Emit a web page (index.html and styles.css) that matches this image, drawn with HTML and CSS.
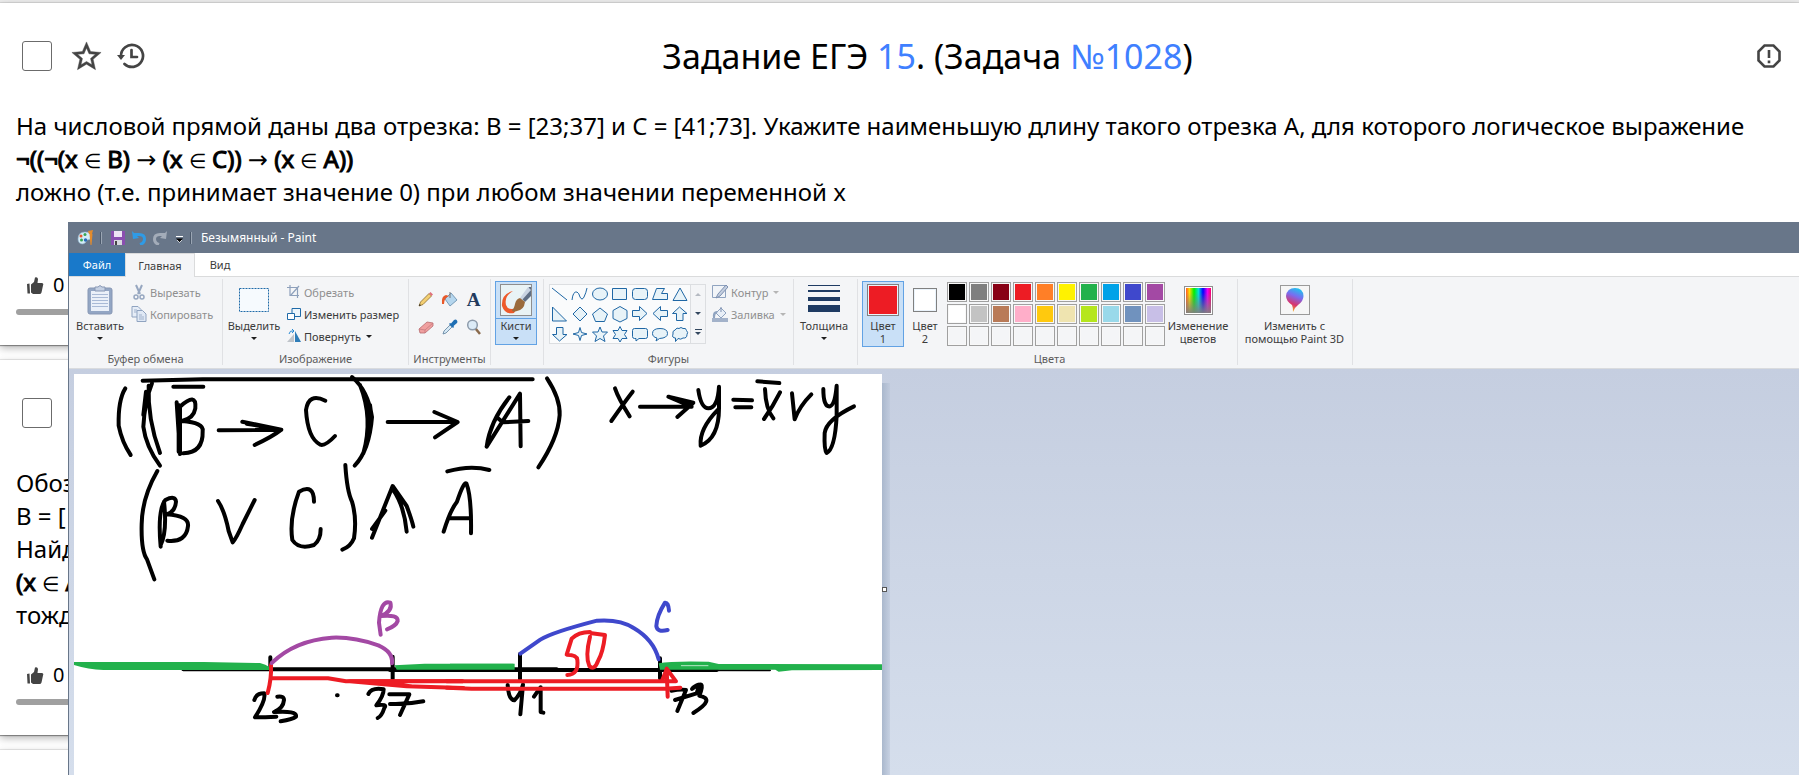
FILE: index.html
```html
<!DOCTYPE html>
<html lang="ru">
<head>
<meta charset="utf-8">
<title>Задание ЕГЭ 15</title>
<link rel="stylesheet" href="styles.css">
</head>
<body>
<main class="page">
  <article class="card card-first">
    <header class="card-head">
      <input class="tick" type="checkbox" aria-label="Выбрать задачу">
      <button class="icon-btn" aria-label="В избранное"><svg width="35" height="35" viewBox="0 0 24 24"><path fill="#444" d="M22 9.24l-7.19-.62L12 2 9.19 8.63 2 9.24l5.46 4.73L5.82 21 12 17.27 18.18 21l-1.63-7.03L22 9.24zM12 15.4l-3.76 2.27 1-4.28-3.32-2.88 4.38-.38L12 6.1l1.71 4.04 4.38.38-3.32 2.88 1 4.28L12 15.4z" stroke="#444" stroke-width=".3"/></svg></button>
      <button class="icon-btn" aria-label="История"><svg width="28" height="28" viewBox="0 0 28 28"><g fill="none" stroke="#444" stroke-width="2.7" stroke-linecap="round"><path d="M4 14a11 11 0 1 1 3.5 8"/><path d="M14.500 8v7h5.500"/></g><path d="M0 13h8l-4 5z" fill="#444"/></svg></button>
      <h1 class="title">Задание ЕГЭ <a href="#t15">15</a>. (Задача <a href="#n1028">№1028</a>)</h1>
      <button class="icon-btn" aria-label="Сообщить об ошибке"><svg width="24" height="24" viewBox="0 0 24 24"><path d="M7.500 1.500h9l6 6v9l-6 6h-9l-6-6v-9z" fill="none" stroke="#444" stroke-width="2.6"/><path d="M12 6v8M12 16.500v2.700" stroke="#444" stroke-width="2.600"/></svg></button>
    </header>
    <div class="task">
      <p>На числовой прямой даны два отрезка: B = [23;37] и C = [41;73]. Укажите наименьшую длину такого отрезка A, для которого логическое выражение</p>
      <p class="formula">¬((¬(x <i>∈</i> B) <b>→</b> (x <i>∈</i> C)) <b>→</b> (x <i>∈</i> A))</p>
      <p>ложно (т.е. принимает значение 0) при любом значении переменной x</p>
    </div>
    <footer class="votes">
      <button class="vote"><svg width="17" height="17" viewBox="0 0 17 17"><path fill="#444" d="M0 7l2.500-.5.5 10H.5zM4 7.500L7 5l1-4.500Q10.500-.5 11 2l-.5 4H15q2 .5 1 2.500l-1.500 7q-.5 1.500-2 1.500H6l-2-1.500z"/></svg><span>0</span></button>
      <div class="rate"></div>
    </footer>
  </article>
  <article class="card">
    <header class="card-head">
      <input class="tick" type="checkbox" aria-label="Выбрать задачу">
    </header>
    <div class="task">
      <p>Обоз</p><p>B = [</p><p>Найд</p><p class="formula">(x <i>∈</i> A</p><p>тожд</p>
    </div>
    <footer class="votes">
      <button class="vote"><svg width="17" height="17" viewBox="0 0 17 17"><path fill="#444" d="M0 7l2.500-.5.5 10H.5zM4 7.500L7 5l1-4.500Q10.500-.5 11 2l-.5 4H15q2 .5 1 2.500l-1.500 7q-.5 1.500-2 1.500H6l-2-1.500z"/></svg><span>0</span></button>
      <div class="rate"></div>
    </footer>
  </article>
  <article class="card card-next"></article>

  <section class="paint" aria-label="Paint">
    <div class="titlebar">
      <svg width="17" height="17" viewBox="0 0 17 17"><path d="M1 10Q1 3 8 3q6 0 6 5 0 3-4 3-1 3-4 4-5 0-5-5z" fill="#d4ecf8" stroke="#8fb4cc" stroke-width=".6"/><circle cx="4" cy="7" r="1.500" fill="#e4572e"/><circle cx="8" cy="5.500" r="1.500" fill="#3aa655"/><circle cx="4.500" cy="11" r="1.500" fill="#3aa655"/><circle cx="8.500" cy="11" r="1.700" fill="#2b6cb8"/><path d="M11 2l5-1-1 4h-3zM12.500 5h3l-1 11h-1z" fill="#e38b2c"/></svg>
      <span class="bar-sep"></span>
      <button class="qa" aria-label="Сохранить"><svg width="14" height="14" viewBox="0 0 14 14"><path d="M0 0h14v14H0z" fill="#8a4fb0"/><path d="M3 0h8v6H3z" fill="#eee3f5"/><path d="M3 9h8v5H3z" fill="#d8d8de"/><path d="M4 10h2v4H4z" fill="#444"/></svg></button>
      <button class="qa" aria-label="Отменить"><svg width="14" height="14" viewBox="0 0 14 14"><path d="M1 3.500h6q5.500 0 5.500 4.500 0 4-4.500 5.500" fill="none" stroke="#2f9be6" stroke-width="3"/><path d="M0 0l1 8 6-1z" fill="#2f9be6"/></svg></button>
      <button class="qa" aria-label="Повторить"><svg width="14" height="14" viewBox="0 0 14 14"><path d="M13 3.500H7Q1.500 3.500 1.500 8q0 4 4.500 5.500" fill="none" stroke="#a3acb9" stroke-width="3"/><path d="M14 0l-1 8-6-1z" fill="#a3acb9"/></svg></button>
      <button class="qa qa-more" aria-label="Настройка"><svg width="7" height="7" viewBox="0 0 7 7"><path d="M0 .5h7" stroke="#fff"/><path d="M0 2.500h7L3.500 6z" fill="#000"/><path d="M1 4l2.500 2.500L6 4" stroke="#fff" stroke-width=".7" fill="none"/></svg></button>
      <span class="bar-sep"></span>
      <span class="win-title">Безымянный - Paint</span>
    </div>
    <nav class="tabs">
      <button class="tab tab-file">Файл</button><button class="tab tab-home">Главная</button><button class="tab tab-view">Вид</button>
    </nav>
    <div class="ribbon">
      <section class="group g-clip">
        <div class="tools">
          <button class="big"><span class="pic"><svg width="26" height="32" viewBox="0 0 26 32"><rect x="1" y="4" width="24" height="26" rx="2" fill="#93a6c4" stroke="#8797b4"/><path d="M4 7h18v20H4z" fill="#eaf0f9"/><path d="M5 10.500h16M5 13.500h16M5 16.500h16M5 19.500h16M5 22.500h16" stroke="#a9bad6"/><path d="M8 3h3q2-3 4 0h3v4H8z" fill="#c4d0e3" stroke="#8797b4"/></svg></span><span>Вставить</span><b class="arr"></b></button>
          <div class="stack">
            <button class="small off"><svg width="16" height="16" viewBox="0 0 16 16"><path d="M5 1l4 9M11 1L7 10" stroke="#97a7c0" stroke-width="2"/><circle cx="5" cy="13" r="2" fill="none" stroke="#97a7c0" stroke-width="1.500"/><circle cx="11" cy="13" r="2" fill="none" stroke="#97a7c0" stroke-width="1.500"/></svg>Вырезать</button>
            <button class="small off"><svg width="16" height="16" viewBox="0 0 16 16"><path d="M1 .5h6l3 3V11H1z" fill="#e6edf7" stroke="#8fa3c0"/><path d="M6 4.500h5.500L15 8v7.500H6z" fill="#dfe8f5" stroke="#8fa3c0"/><path d="M3 4h3M3 6h3M8 9h3M8 11h5M8 13h5" stroke="#9fb1cc"/></svg>Копировать</button>
          </div>
        </div>
        <h2>Буфер обмена</h2>
      </section>
      <section class="group g-img">
        <div class="tools">
          <button class="big"><span class="pic"><svg width="32" height="32" viewBox="0 0 32 32"><rect x="1.500" y="4.500" width="29" height="23" fill="#f6fafe" stroke="#1f6aa8" stroke-dasharray="2 1"/></svg></span><span>Выделить</span><b class="arr"></b></button>
          <div class="stack">
            <button class="small off"><svg width="14" height="14" viewBox="0 0 14 14"><path d="M3 0v10.500h9M0 2.500h10.500V13M4 10l8-9" fill="none" stroke="#8ea0bb" stroke-width="1.200"/></svg>Обрезать</button>
            <button class="small"><svg width="14" height="14" viewBox="0 0 14 14"><path d="M5 1.500h8.500v8H5z" fill="#eef6fc" stroke="#1f6aa8"/><path d="M.5 6.500h7v6h-7z" fill="#fff" stroke="#1f6aa8"/></svg>Изменить размер</button>
            <button class="small"><svg width="14" height="14" viewBox="0 0 14 14"><path d="M0 13h7V5z" fill="#bfc4ca"/><path d="M8 13V2l6 11z" fill="#2f7db8"/><path d="M2 5Q3 1 6 2M5 0l2 2-2 2" fill="none" stroke="#2a8ad4"/></svg>Повернуть<b class="arr"></b></button>
          </div>
        </div>
        <h2>Изображение</h2>
      </section>
      <section class="group g-tools">
        <div class="tools tool-grid">
          <button aria-label="Карандаш"><svg width="16" height="16" viewBox="0 0 16 16"><path d="M1 15l1.500-4L11 2.500l2.500 2.500L5 13.500z" fill="#f3cf73" stroke="#8a6b2c" stroke-width=".8"/><path d="M11 2.500l1.500-1.500L15 3.500 13.500 5z" fill="#e0707c"/><path d="M1 15l.7-2 1.300 1.300z" fill="#222"/></svg></button>
          <button aria-label="Заливка"><svg width="17" height="17" viewBox="0 0 17 17"><path d="M4 8l6-6 6 7-7 6z" fill="#b5d6ee" stroke="#5f88a8" stroke-width=".8"/><path d="M1 13Q0 5 5 4l3 1Q3 7 3 13z" fill="#e8592a"/><path d="M9 1v6" stroke="#777"/></svg></button>
          <button aria-label="Текст" class="letter">A</button>
          <button aria-label="Ластик"><svg width="16" height="16" viewBox="0 0 16 16"><path d="M1 10l8-7 6 1v3l-8 7H2z" fill="#f0a0a0" stroke="#b86b6f" stroke-width=".8"/><path d="M1 10l6 1 8-7M7 11v3" stroke="#c87a7f" stroke-width=".8" fill="none"/></svg></button>
          <button aria-label="Палитра"><svg width="16" height="16" viewBox="0 0 16 16"><path d="M1 15l1-3 6-6 2 2-6 6z" fill="#d5e8f5" stroke="#5d7f9c" stroke-width=".8"/><path d="M7 5l1-1 1 .5L12 1q2-1 3 .5T15 4l-3.500 3 .5 1-1 1z" fill="#1f6fb4"/></svg></button>
          <button aria-label="Масштаб"><svg width="16" height="16" viewBox="0 0 16 16"><path d="M9.500 9.500L14 15" stroke="#8a6a4c" stroke-width="2.500"/><circle cx="6.500" cy="6" r="4.800" fill="#dcebf7" stroke="#8d9bab" stroke-width="1.500"/></svg></button>
        </div>
        <h2>Инструменты</h2>
      </section>
      <section class="group g-brush">
        <div class="tools">
          <button class="big chosen brush"><span class="pic"><svg width="32" height="32" viewBox="0 0 32 32"><rect x=".5" y=".5" width="31" height="31" fill="#e9f3f5" stroke="#8e8e8e"/><path d="M13 7Q1 10 2 22q3 9 12 7l3-5q-9 3-11-3Q4 12 13 7z" fill="#ee5a2a"/><path d="M31 3v9l-6 6-4-4 8-11z" fill="#5f6f85"/><path d="M28 3l-8 11 2 2 9-10z" fill="#c9d4e2"/><path d="M20 14l5 4q-1 8-8 9-5 2-5-1 2-1 3-6 1-5 5-6z" fill="#9a6b3c"/></svg></span><span>Кисти</span><b class="arr"></b></button>
        </div>
      </section>
      <section class="group g-shapes">
        <div class="tools">
          <div class="gallery">
            <div class="shapes">
              <button aria-label="Линия"><svg viewBox="0 0 20 20"><path d="M2 4l15 12"/></svg></button>
              <button aria-label="Кривая"><svg viewBox="0 0 20 20"><path fill="none" d="M2 16q1-9 5-8 2 1 3 5 2 4 4 0 2-4 3-9"/></svg></button>
              <button aria-label="Овал"><svg viewBox="0 0 20 20"><ellipse cx="10" cy="10" rx="7.500" ry="6"/></svg></button>
              <button aria-label="Прямоугольник"><svg viewBox="0 0 20 20"><path d="M2.500 4.500h14v11h-14z"/></svg></button>
              <button aria-label="Скруглённый прямоугольник"><svg viewBox="0 0 20 20"><rect x="2.500" y="4.500" width="15" height="11" rx="3"/></svg></button>
              <button aria-label="Многоугольник"><svg viewBox="0 0 20 20"><path d="M6.500 4.500h8l-3 5h6v6h-15z"/></svg></button>
              <button aria-label="Треугольник"><svg viewBox="0 0 20 20"><path d="M10 4l7 12.500H3z"/></svg></button>
              <button aria-label="Прямоугольный треугольник"><svg viewBox="0 0 20 20"><path d="M2.500 3v14h14z"/></svg></button>
              <button aria-label="Ромб"><svg viewBox="0 0 20 20"><path d="M10 3l7 7-7 7-7-7z"/></svg></button>
              <button aria-label="Пятиугольник"><svg viewBox="0 0 20 20"><path d="M10 4l7.500 6-3 7.500h-9l-3-7.500z"/></svg></button>
              <button aria-label="Шестиугольник"><svg viewBox="0 0 20 20"><path d="M10 2.500l7 4v8l-7 3.500-7-3.500v-8z"/></svg></button>
              <button aria-label="Стрелка вправо"><svg viewBox="0 0 20 20"><path d="M2.500 6.500h7v-4l7.500 7-7.500 7v-4h-7z"/></svg></button>
              <button aria-label="Стрелка влево"><svg viewBox="0 0 20 20"><path d="M17.500 6.500h-7v-4L3 9.500l7.500 7v-4h7z"/></svg></button>
              <button aria-label="Стрелка вверх"><svg viewBox="0 0 20 20"><path d="M6.500 16.500v-7h-4L9.500 3l7.500 6.500h-4v7z"/></svg></button>
              <button aria-label="Стрелка вниз"><svg viewBox="0 0 20 20"><path d="M6.500 3.500v7h-4l7 6.500 7.500-6.500h-4v-7z"/></svg></button>
              <button aria-label="Звезда 4"><svg viewBox="0 0 20 20"><path d="M10 3.500l1.500 5 5.500 1.500-5.500 1.500-1.500 5-1.500-5L3 10l5.500-1.500z"/></svg></button>
              <button aria-label="Звезда 5"><svg viewBox="0 0 20 20"><path d="M10 3l2 5h5.500l-4 4 1.500 5.500-5-3-5 3L6.500 12l-4-4H8z"/></svg></button>
              <button aria-label="Звезда 6"><svg viewBox="0 0 20 20"><path d="M10 2.500l2 4h5l-2.500 4 2.500 4h-5l-2 3.500-2-3.500H3l2.500-4-2.500-4h5z"/></svg></button>
              <button aria-label="Выноска"><svg viewBox="0 0 20 20"><path d="M4.500 4.500h11q2 0 2 2v6q0 2-2 2H9L6 17v-2.500H4.500q-2 0-2-2v-6q0-2 2-2z"/></svg></button>
              <button aria-label="Овальная выноска"><svg viewBox="0 0 20 20"><path d="M6 17l1-3Q2.500 13 2.500 9.500q0-5 7.500-5t7.500 5q0 4.500-8 5z"/></svg></button>
              <button aria-label="Облако"><svg viewBox="0 0 20 20"><path d="M5 6q2-3 4-1.500 2-2 4 0 3-1 3.500 2 2 2 .5 4 0 4-4 3.500-2 2-5 .5l-2.500 3V14q-4 0-2.500-4Q2 7 5 6z"/></svg></button>
            </div>
            <div class="scroll"><b class="arr up"></b><b class="arr"></b><b class="arr more"></b></div>
          </div>
          <div class="stack">
            <button class="small off"><svg width="16" height="16" viewBox="0 0 16 16"><path d="M.5 1.500h13v12H.5z" fill="#f1f4f8" stroke="#8fa3c0"/><path d="M4 14l2-4 8-9 2 2-8 9z" fill="#c3cedf" stroke="#7c8fb0"/></svg>Контур<b class="arr"></b></button>
            <button class="small off"><svg width="16" height="16" viewBox="0 0 16 16"><path d="M0 12h16v4H0z" fill="#a3b2ca"/><path d="M4 7l5-5 5 5-5 5z" fill="#e9eff7" stroke="#8fa3c0"/><path d="M1 12q-1-7 4-7l1 1q-3 1-3 6z" fill="#8fa3c0"/><path d="M9 1v5" stroke="#7c8fb0"/></svg>Заливка<b class="arr"></b></button>
          </div>
        </div>
        <h2>Фигуры</h2>
      </section>
      <section class="group g-size">
        <div class="tools">
          <button class="big"><span class="pic"><svg width="32" height="32" viewBox="0 0 32 32"><path d="M0 1h32v1H0zM0 6h32v2H0zM0 13h32v4H0zM0 21h32v7H0z" fill="#1f3b63"/></svg></span><span>Толщина</span><b class="arr"></b></button>
        </div>
      </section>
      <section class="group g-colors">
        <div class="tools">
          <button class="big chosen color-one"><span class="pic"><span class="swatch red"></span></span><span>Цвет</span><span>1</span></button>
          <button class="big second"><span class="pic"><span class="swatch white"></span></span><span>Цвет</span><span>2</span></button>
          <div class="palette">
            <i class="c-black"></i><i class="c-gray"></i><i class="c-dark"></i><i class="c-red"></i><i class="c-orange"></i><i class="c-yellow"></i><i class="c-green"></i><i class="c-cyan"></i><i class="c-indigo"></i><i class="c-purple"></i>
            <i class="c-white"></i><i class="c-silver"></i><i class="c-brown"></i><i class="c-pink"></i><i class="c-gold"></i><i class="c-sand"></i><i class="c-lime"></i><i class="c-sky"></i><i class="c-steel"></i><i class="c-lavender"></i>
            <i></i><i></i><i></i><i></i><i></i><i></i><i></i><i></i><i></i><i></i>
          </div>
          <button class="big edit"><span class="pic"><span class="rainbow"></span></span><span>Изменение</span><span>цветов</span></button>
        </div>
        <h2>Цвета</h2>
      </section>
      <section class="group g-3d">
        <div class="tools">
          <button class="big wide"><span class="pic"><svg width="30" height="30" viewBox="0 0 30 30"><defs><linearGradient id="drop" x1=".7" y1="0" x2=".4" y2="1"><stop offset="0" stop-color="#19c8ee"/><stop offset=".35" stop-color="#7a6cf0"/><stop offset=".7" stop-color="#d8346e"/><stop offset="1" stop-color="#f7b21b"/></linearGradient></defs><rect x=".5" y=".5" width="29" height="29" fill="#f6f6f6" stroke="#9a9a9a"/><path d="M15 3q8 0 8.500 8 0 5-5.500 9-3 2-5 7 0-5-1-7-6-4-6-9 1-8 9-8z" fill="url(#drop)"/></svg></span><span>Изменить с</span><span>помощью Paint 3D</span></button>
        </div>
      </section>
    </div>
    <div class="workspace">
      <div class="canvas">
        <svg class="drawing" width="808" height="401" viewBox="74 374 808 401" role="img" aria-label="Рисунок от руки: решение на числовой прямой">
          <g class="ink" transform="translate(60 365) scale(.33333)">
            <path d="M248 47l180-4h990M340 65h90"/>
            <path d="M196 70q-22 35-20 112 10 50 36 88M276 55q-22 55-26 130 8 60 50 117M266 62q-4 100 34 202M258 80l-8 70"/>
            <path d="M350 112l10 155V125q50-45 46 5-5 30-40 38 66 5 62 30 2 65-58 67M356 120v140"/>
            <path d="M476 196l188-2-117-24M560 176l104 18q-25 20-80 46"/>
            <path d="M796 107q-50-25-58 28 5 85 43 104 15 5 44-26"/>
            <path d="M876 36q48 40 60 120-8 100-52 146M900 60q40 100 10 205M930 120q8 40-4 90"/>
            <path d="M983 171h210l-70-30M1193 171l-68 46"/>
            <path d="M292 318q-46 80-47 160-2 80 16 105l22 60"/>
            <path d="M302 545q-10-110 14-140 30-15 32 5-2 30-28 38 68 5 64 35-5 50-62 44M302 540q20-40 10-130"/>
            <path d="M474 408q20 30 32 90l12 34q10-10 30-55 15-30 36-72"/>
            <path d="M762 410q0-55-45-30-30 80-20 145 20 30 65 15 20-15 20-48"/>
            <path d="M856 300q5 80 20 110 15 50 6 110-10 25-35 34"/>
            <path d="M936 518l62-155 42 60q15 40 20 62M936 492l40-55M998 372q35 50 42 128"/>
            <path d="M1162 319q70-20 126-4M1151 500q20-65 40-90 20-60 28-55 16 40 14 150M1165 460h64"/>
          </g>
          <g class="ink" transform="translate(500 365) scale(.33333)">
            <path d="M-40 245q10-75 68-148M-40 245L60 86l2 158M-6 160l14 12 77-4"/>
            <path d="M141 40q40 60 38 110-5 70-64 157"/>
            <path d="M345 70q10 30 44 84M398 80q-20 25-64 88M420 125h155l-70-30 75 18-48 43"/>
            <path d="M595 75q8 55 30 55 28 0 32-65v65q0 90-55 112-5-50 52-108"/>
            <path d="M700 104l56 2M706 127h48M772 49l66 5M795 72q2 60 25 88M840 82q-20 40-48 80"/>
            <path d="M876 85l8 78q15-40 50-75"/>
            <path d="M970 72q0 55 20 52 15-5 20-62v90q-5 100-30 112-8-10-6-60 5-40 88-80"/>
          </g>
          <g class="ink" transform="translate(60 580) scale(.33333)">
            <path d="M370 268h1120M631 232v32M998 230v66"/>
            <path d="M583 360q5-20 30-20 5 20-28 72 30 0 64-2M652 350q20-3 20 10-2 25-30 36 70-5 66 14-10 8-46 14"/>
            <path d="M925 342q10-20 46-14 0 20-22 48 35-5 24 8-8 25-20 30M988 343h60l-28 62M990 372q50 2 100-8M831 346h2"/>
          </g>
          <g class="ink" transform="translate(450 580) scale(.33333)">
            <path d="M10 270l950 1" class="thin"/>
            <path d="M-180 270h980M210 222v75M630 235v60M173 315q3 45 20 46 20-20 26-48l-8 90M252 350q20-30 20-28v74l8 2"/>
            <path d="M664 332q30-5 44-2l-26 63M675 360l65-20q10-30 2-25-15 8-16 12 45-35 22 20 50 10-18 52"/>
          </g>
          <g class="ink green" transform="translate(60 580) scale(.33333)">
            <path class="solid" d="M42 246h390l168 3q18 4 28 12v9H130q-45-2-88-15zM1004 256l90-5h270v18h-354z"/>
          </g>
          <g class="ink green" transform="translate(450 580) scale(.33333)">
            <path class="solid" d="M626 250q40-8 150-5l30 7 490 1v17l-270 1-40 4-10-6H630zM0 251h190v12H0z"/>
            <path class="gap" d="M694 257h80"/>
          </g>
          <g class="ink red" transform="translate(60 580) scale(.33333)">
            <path d="M633 255q2 40-10 84M636 295h168l54 9h350M870 304l170 15 170 5"/>
            <path class="solid" d="M858 298h350v10h-180l28 6v8l-120-10z"/>
          </g>
          <g class="ink purple" transform="translate(60 580) scale(.33333)">
            <path d="M635 249q70-68 180-76 65-3 140 23 45 20 41 54"/><path d="M962 164l-5-36q5-70 34-60 8 25-28 40 52-5 50 15-5 15-32 25"/>
          </g>
          <g class="ink blue" transform="translate(450 580) scale(.33333)">
            <path d="M211 221l60-42q35-22 170-57 70-5 110 22 60 35 75 94M657 92q-2-25-12-24-25 40-26 70 2 20 34 12"/>
          </g>
          <g class="ink red" transform="translate(450 580) scale(.33333)">
            <path d="M-10 304h688l-28-38 3 84M650 268l-14 34M-10 323l75 3h580l46-3"/>
            <path d="M420 156q-35 0-55 20l-15 48q30 0 32 15 5 45-30 46M420 170q-15 60-2 88 15 15 26-15 15-25 21-78l-40-5"/>
          </g>
        </svg>
      </div>
      <div class="edge"><span class="handle"></span></div>
    </div>
  </section>
</main>
</body>
</html>
```
FILE: styles.css
```css
* { box-sizing: border-box; }
body { margin: 0; background: #fff; color: #000; font-family: "Noto Sans", "Open Sans", sans-serif; font-size: 24px; line-height: 33px; }
button { border: 0; padding: 0; margin: 0; background: none; color: inherit; font: inherit; }
h1, h2, p { margin: 0; font-weight: 400; }
svg { display: block; flex: none; }

.page { position: relative; height: 100vh; overflow: hidden; padding-top: 3px; background: linear-gradient(#ececec 3px, #fff 3px); }
.card { background: #fff; padding: 37px 16px 30px; margin-bottom: 15px; box-shadow: 0 0 1px rgba(0, 0, 0, .5), 0 1px 1px rgba(0, 0, 0, .3), 0 3px 8px rgba(0, 0, 0, .3); }
.card-head { display: flex; align-items: center; height: 32px; padding: 0 2px 0 6px; }
.tick { appearance: none; flex: none; width: 30px; height: 30px; margin: 0; border: 1px solid #6b6b6b; border-radius: 3px; background: #fff; }
.icon-btn { flex: none; margin-right: 13px; }
.tick + .icon-btn { margin-left: 17px; }
.icon-btn:last-child { margin-right: 0; }
.title { flex: 1; padding-right: 60px; text-align: center; font-size: 34px; line-height: 32px; }
.title a { color: #3f80ff; text-decoration: none; }
.task { margin-top: 37px; }
.card-first .task { padding-bottom: 33px; }
.formula { -webkit-text-stroke: 1px #000; }
.formula i { font-size: 20px; font-style: normal; line-height: 1; -webkit-text-stroke: 0; }
.formula b { font-family: "DejaVu Sans", sans-serif; font-weight: 400; line-height: 1; -webkit-text-stroke: 0; }
.votes { margin-top: 30px; }
.vote { display: flex; align-items: center; gap: 9px; height: 28px; padding-left: 11px; font-size: 20px; line-height: 28px; }
.rate { height: 6px; margin-top: 10px; border-radius: 3px; background: #a0a0a0; }
.card-next { height: 60px; }

.paint { position: absolute; left: 68px; right: 0; top: 222px; bottom: 0; display: flex; flex-direction: column; border-left: 1px solid #687689; background: #f4f5f7; color: #3b3b3b; font-size: 11px; line-height: 13px; }
.titlebar { display: flex; align-items: center; height: 31px; padding-left: 8px; background: #687689; color: #fff; font-size: 12px; }
.bar-sep { width: 2px; height: 12px; margin: 0 9px 0 6px; border: solid #9aa5b3; border-width: 0 1px 0 0; background: #4b596b; }
.qa { margin-right: 7px; }
.qa-more { margin: 4px 1px 0 2px; }
.tabs { display: flex; height: 24px; background: #fff; border-bottom: 1px solid #dadbdc; }
.tab { height: 23px; }
.tab-file { width: 56px; background: #1979ca; color: #fff; }
.tab-home { width: 70px; height: 24px; border: solid #dadbdc; border-width: 1px 1px 0; background: #f4f5f7; }
.tab-view { width: 50px; }

.ribbon { display: flex; height: 92px; padding: 2px 0 3px; border-bottom: 1px solid #d9dbde; }
.group { display: flex; flex-direction: column; justify-content: space-between; border-right: 1px solid #e0e1e4; }
.group h2 { color: #5c5c5c; font-size: 11px; line-height: 13px; text-align: center; }
.tools { display: flex; padding-top: 2px; }
.g-clip { width: 154px; }
.g-img { width: 186px; }
.g-tools { width: 82px; }
.g-brush { width: 53px; padding-left: 4px; }
.g-shapes { width: 250px; }
.g-size { width: 64px; }
.g-colors { width: 380px; padding-left: 4px; }
.g-3d { width: 115px; }

.big { flex: none; display: flex; flex-direction: column; align-items: center; width: 62px; min-height: 64px; padding-top: 3px; line-height: 13px; text-align: center; white-space: nowrap; }
.pic { display: flex; align-items: center; justify-content: center; height: 32px; margin-bottom: 3px; }
.arr { width: 0; height: 0; border: solid transparent; border-width: 3px 3px 0; border-top-color: #1d1d1d; }
.big .arr { margin-top: 5px; }
.chosen { width: 42px; padding-top: 2px; border: 1px solid #62a2e4; background: #c9e0f7; }
.color-one { height: 66px; }
.brush { background: linear-gradient(#c9e0f7 36px, #62a2e4 36px, #62a2e4 37px, #c9e0f7 37px); }
.second { width: 42px; }
.edit { width: 66px; }
.g-size .big { width: 60px; }
.wide { width: 113px; }

.stack { display: flex; flex-direction: column; }
.small { display: flex; align-items: center; gap: 3px; height: 22px; white-space: nowrap; }
.small .arr { margin-left: 2px; }
.g-img .stack { padding-left: 2px; }
.off { color: #8f8f8f; }
.off .arr { border-top-color: #b5b5b5; }
.g-shapes .tools { padding-left: 5px; gap: 6px; }

.tool-grid { display: grid; grid-template-columns: repeat(3, 24px); grid-auto-rows: 28px; justify-content: center; padding-top: 6px; }
.tool-grid button { display: flex; align-items: center; justify-content: center; }
.letter { color: #223a5e; font-family: "Liberation Serif", serif; font-size: 19px; font-weight: 700; }

.gallery { display: flex; width: 157px; height: 60px; margin-top: 3px; border: 1px solid #dcdee1; background: #fafbfc; }
.shapes { display: grid; grid-template-columns: repeat(7, 20px); grid-template-rows: repeat(3, 20px); height: 58px; align-content: center; }
.shapes svg { width: 20px; height: 20px; fill: #e8f3f8; stroke: #1f67a5; stroke-width: 1; }
.shapes button { display: flex; align-items: center; }
.scroll { flex: 1; display: flex; flex-direction: column; align-items: center; justify-content: space-around; border-left: 1px solid #dcdee1; background: #f4f5f7; }
.scroll .arr { border-top-color: #33475f; }
.scroll .up { border-width: 0 3px 3px; border-bottom-color: #b5bac2; }
.more { position: relative; }
.more::before { content: ""; position: absolute; left: -3px; top: -6px; width: 7px; height: 1px; background: #33475f; }

.swatch { width: 32px; height: 32px; border: 1px solid #808080; box-shadow: inset 0 0 0 1px #eaf3fb; }
.red { background: #ed1c24; }
.white { width: 24px; height: 24px; background: #fff; }
.palette { display: grid; grid-template-columns: repeat(10, 20px); grid-auto-rows: 20px; gap: 2px; padding: 1px 0 0 1px; }
.palette i { border: 1px solid #a0a0a0; box-shadow: inset 0 0 0 1px #f8f8f8; background: #f4f5f7; }
.palette .c-black { background: #000; }
.palette .c-gray { background: #7f7f7f; }
.palette .c-dark { background: #880015; }
.palette .c-red { background: #ed1c24; }
.palette .c-orange { background: #ff7f27; }
.palette .c-yellow { background: #fff200; }
.palette .c-green { background: #22b14c; }
.palette .c-cyan { background: #00a2e8; }
.palette .c-indigo { background: #3f48cc; }
.palette .c-purple { background: #a349a4; }
.palette .c-white { background: #fff; }
.palette .c-silver { background: #c3c3c3; }
.palette .c-brown { background: #b97a57; }
.palette .c-pink { background: #ffaec9; }
.palette .c-gold { background: #ffc90e; }
.palette .c-sand { background: #efe4b0; }
.palette .c-lime { background: #b5e61d; }
.palette .c-sky { background: #99d9ea; }
.palette .c-steel { background: #7092be; }
.palette .c-lavender { background: #c8bfe7; }
.rainbow { width: 29px; height: 29px; border: 1px solid #8f8f8f; box-shadow: inset 0 0 0 1px #fff; background: linear-gradient(transparent 20%, #808080), linear-gradient(90deg, #f33, #fd0, #0e0, #0dd, #00f, #e0e, #f04); }

.workspace { flex: 1; min-height: 0; display: flex; padding: 5px 0 0 5px; background: linear-gradient(#c5cee0, #d5deec); }
.canvas { flex: none; width: 808px; background: #fff; overflow: hidden; }
.edge { width: 8px; margin-top: 9px; padding-top: 204px; background: linear-gradient(90deg, #aab8cd, rgba(185, 197, 217, .5)); }
.handle { display: block; width: 5px; height: 5px; border: 1px solid #555; background: #fff; }

.ink { fill: none; stroke: #000; stroke-width: 12; stroke-linecap: round; stroke-linejoin: round; }
.thin { stroke-width: 6; }
.green { stroke: #22b14c; }
.red.ink { background: none; stroke: #ed1c24; }
.purple { stroke: #a349a4; }
.blue { stroke: #3f48cc; }
.solid { stroke: none; }
.green .solid { fill: #22b14c; }
.red .solid { fill: #ed1c24; }
.gap { stroke: #b8e6c6; stroke-width: 3; }
```
